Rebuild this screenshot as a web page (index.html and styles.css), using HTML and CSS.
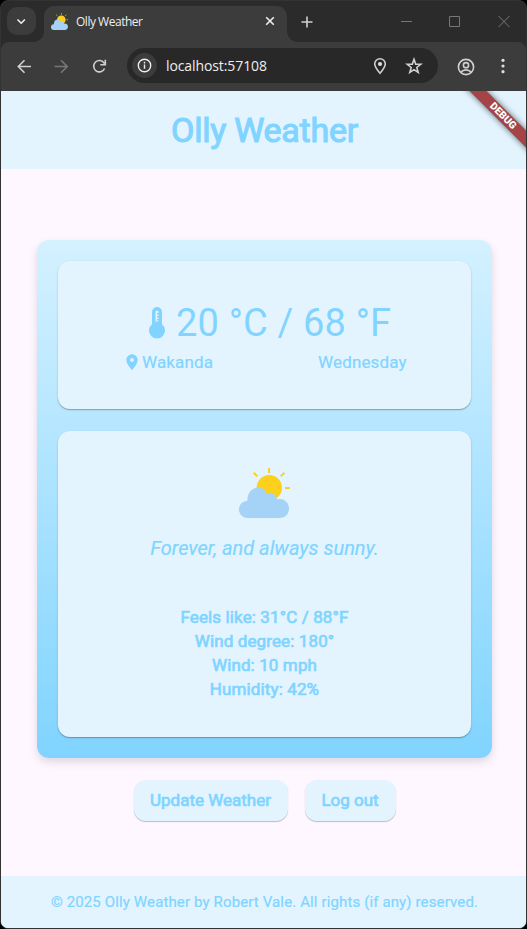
FILE: index.html
```
<!DOCTYPE html>
<html lang="en">
<head>
<meta charset="utf-8">
<title>Olly Weather</title>
<link rel="stylesheet" href="styles.css">
</head>
<body>
<svg class="defs" width="0" height="0">
  <symbol id="weather" viewBox="0 0 50 50">
    <g fill="#fdd01e"><circle cx="30.3" cy="19.8" r="12.7"/><rect x="29.1" y="0" width="2" height="5"/><rect x="46" y="19" width="5" height="2"/></g>
    <path d="M14.7 4.7l3.7 3.7M45.4 4.7l-3.7 3.7" stroke="#fdd01e" stroke-width="2"/>
    <path d="M8.5 50a8.6 8.6 0 0 1 0-17.2C7.500 19.500 23.500 14.500 27.600 25.500C32 23.500 37 26 38.300 31.500C45 29.500 50 35 50 40.500C50 46 46 50 40.500 50z" fill="#a5d3f7"/>
  </symbol>
</svg>
<div class="window">
  <div class="tabstrip">
    <div class="tab-search"><svg width="28" height="28" viewBox="0 0 28 28"><path d="M10.500 12.500l3.700 3.700 3.700-3.700" class="line white"/></svg></div>
    <div class="tab">
      <svg class="favicon" width="17" height="17"><use href="#weather"/></svg>
      <span class="tab-title">Olly Weather</span>
      <svg class="tab-close" width="10" height="10" viewBox="0 0 10 10"><path d="M1.200 1.200l7.600 7.600M8.800 1.200l-7.600 7.600" class="line white"/></svg>
    </div>
    <svg class="new-tab" width="12" height="12" viewBox="0 0 12 12"><path d="M6 .5v11M.5 6h11" class="line"/></svg>
    <svg class="controls" width="110" height="12" viewBox="0 0 110 12"><path d="M0 6.500h11M48.500 1.500h10v10h-10zM97.500 1l11 11M108.500 1l-11 11" fill="none" stroke="#777"/></svg>
  </div>
  <div class="toolbar">
    <svg class="nav" width="126" height="48" viewBox="0 0 126 48"><path d="M30 24.500H17.500M23.500 18.300l-6.200 6.200 6.200 6.200" class="line"/><path d="M53.500 24.500H66M60 18.300l6.200 6.200-6.200 6.200" class="line dim"/><path d="M103.300 21.300A5.700 5.700 0 1 0 103.600 26.500M104.300 17.800v4.900h-5" class="line"/></svg>
    <div class="omnibox">
      <svg class="info" width="25" height="25" viewBox="0 0 25 25"><circle cx="12.500" cy="12.500" r="12.500" fill="#3c3c3c"/><circle cx="12.500" cy="12.500" r="6.200" class="line white thin"/><path d="M12.500 11.500v4.300M12.500 8.800v1.600" class="line white thin"/></svg>
      <span class="url">localhost:57108</span>
      <svg class="pin" width="14" height="18" viewBox="0 0 14 18"><path d="M7 16.200C4 12.700 1.700 9.800 1.700 7a5.300 5.300 0 0 1 10.600 0c0 2.800-2.300 5.700-5.300 9.200z" class="line"/><circle cx="7" cy="7" r="2.100" fill="#dedede"/></svg>
      <svg class="star" width="18" height="18" viewBox="0 0 18 18"><path d="M9 2.300l1.700 4.800 5.100.2-4 3.200 1.400 4.900L9 12.600l-4.200 2.800 1.400-4.900-4-3.200 5.100-.2z" class="line"/></svg>
    </div>
    <svg class="profile" width="18" height="18" viewBox="0 0 18 18"><circle cx="9" cy="9" r="7.600" class="line"/><circle cx="9" cy="7.200" r="2.600" class="line"/><path d="M3.600 14.100q5.400-4.600 10.800 0" class="line"/></svg>
    <svg class="more" width="4" height="16" viewBox="0 0 4 16"><g fill="#dedede"><circle cx="2" cy="2.300" r="1.600"/><circle cx="2" cy="8" r="1.600"/><circle cx="2" cy="13.700" r="1.600"/></g></svg>
  </div>
  <div class="app">
    <header class="app-header"><h1>Olly Weather</h1><div class="debug"><span>DEBUG</span></div></header>
    <main class="main">
      <section class="forecast">
        <div class="panel current">
          <div class="temp"><svg width="16" height="33" viewBox="0 0 16 33"><path d="M3 17.200V5a5 5 0 0 1 10 0v12.200A8 8 0 1 1 3 17.200z" fill="#80d4ff"/><path d="M6.500 14.500V5a1.500 1.500 0 0 1 3 0v1H8v1.500h1.500V9H8v1.500h1.500V12H8v1.500h1.500v1z" fill="#e3f4ff"/></svg><span>20 °C / 68 °F</span></div>
          <div class="place-row">
            <div class="place"><svg width="12" height="17" viewBox="0 0 12 17"><path fill-rule="evenodd" d="M6 16.300C3 12.600.3 9.500.3 6a5.700 5.700 0 0 1 11.400 0c0 3.500-2.700 6.600-5.700 10.300zM6 4a2 2 0 1 0 0 4 2 2 0 0 0 0-4z" fill="#80d4ff"/></svg><span>Wakanda</span></div>
            <div class="day">Wednesday</div>
          </div>
        </div>
        <div class="panel details">
          <svg class="weather-icon" width="52" height="50" viewBox="0 0 52 50"><use href="#weather" width="50" height="50" class="spill"/></svg>
          <p class="summary">Forever, and always sunny.</p>
          <div class="stats"><div class="feels">Feels like: 31°C / 88°F</div><div class="degree">Wind degree: 180°</div><div class="wind">Wind: 10 mph</div><div class="humidity">Humidity: 42%</div></div>
        </div>
      </section>
      <div class="actions"><button class="update">Update Weather</button><button class="logout">Log out</button></div>
    </main>
    <footer class="app-footer">© 2025 Olly Weather by Robert Vale. All rights (if any) reserved.</footer>
  </div>
</div>
</body>
</html>
```
FILE: styles.css
```
* { box-sizing: border-box; }
body { margin: 0; background: #000; font-family: Roboto, sans-serif; }
svg { display: block; flex: none; }
.defs { position: absolute; }
symbol { overflow: visible; }
.window { width: 527px; height: 929px; border: 1px solid #333; border-radius: 8px; overflow: hidden; background: #2b2b2b; display: flex; flex-direction: column; }
.line { fill: none; stroke: #d0d0d0; stroke-width: 1.6; }
.line.white { stroke: #eee; }
.line.dim { stroke: #777; }
.line.thin { stroke-width: 1.4; }
.tabstrip { height: 41px; flex: none; display: flex; align-items: flex-start; padding-left: 6px; }
.tab-search { width: 29px; height: 28px; margin-top: 6px; border-radius: 10px; background: #3c3c3c; }
.tab { width: 243px; height: 36px; margin: 5px 0 0 8px; border-radius: 10px 10px 0 0; background: #3c3c3c; display: flex; align-items: center; padding: 0 12px 6px 7px; position: relative; }
.tab::before, .tab::after { content: ""; position: absolute; bottom: 0; width: 10px; height: 10px; }
.tab::before { left: -10px; background: radial-gradient(circle at 0 0, transparent 9.500px, #3c3c3c 10px); }
.tab::after { right: -10px; background: radial-gradient(circle at 100% 0, transparent 9.500px, #3c3c3c 10px); }
.tab-title { margin-left: 8px; color: #eee; font: 12px "Open Sans", sans-serif; letter-spacing: -.48px; white-space: nowrap; }
.tab-close { margin-left: auto; }
.new-tab { margin: 15px 0 0 14px; }
.controls { margin: 14px 0 0 88px; overflow: visible; }
.toolbar { height: 49px; flex: none; background: #3c3c3c; border-radius: 8px 8px 0 0; display: flex; align-items: flex-start; }
.omnibox { width: 311px; height: 35px; margin-top: 6px; border-radius: 18px; background: #282828; display: flex; align-items: center; padding-left: 5px; }
.url { width: 207px; margin-left: 9px; color: #eee; font: 14px "Open Sans", sans-serif; letter-spacing: -.1px; }
.star { margin-left: 18px; }
.profile { margin: 16px 0 0 19px; }
.more { margin: 16px 0 0 26px; }
.app { flex: 1; min-height: 0; display: flex; flex-direction: column; background: #fef7ff; color: #80d4ff; }
.app-header { height: 78px; flex: none; background: #e3f4ff; display: flex; justify-content: center; align-items: center; position: relative; overflow: hidden; padding-left: 2px; }
h1 { margin: 0; font-size: 34px; font-weight: 400; line-height: 40px; letter-spacing: -.25px; -webkit-text-stroke: 1.1px #80d4ff; }
.debug { position: absolute; width: 120px; height: 12px; right: -37px; top: 19px; background: #a54446; transform: rotate(45deg); box-shadow: 0 0 6px rgba(0,0,0,.6); color: #fff; text-align: center; font: 900 10.200px/12px Roboto, sans-serif; }
.main { flex: 1; display: flex; flex-direction: column; align-items: center; padding: 71px 0 0 2px; }
.forecast { width: 455px; height: 518px; flex: none; border-radius: 12px; padding: 21px; background: linear-gradient(#d4f1ff, #80d4ff); box-shadow: 0 4px 8px rgba(0,0,0,.13); display: flex; flex-direction: column; gap: 22px; }
.panel { background: #e3f4ff; border-radius: 12px; box-shadow: 0 1px 1px rgba(0,0,0,.25), 0 1px 3px rgba(0,0,0,.09); }
.current { height: 148px; padding-top: 38px; }
.temp { display: flex; align-items: center; gap: 11px; margin-left: 91px; height: 48px; font-size: 38px; letter-spacing: .18px; white-space: nowrap; }
.place-row { display: flex; align-items: center; margin-left: 68px; height: 30px; font-size: 17px; letter-spacing: .15px; -webkit-text-stroke: .2px #80d4ff; }
.place { display: flex; align-items: center; gap: 4px; width: 192px; }
.details { height: 306px; display: flex; flex-direction: column; align-items: center; padding-top: 37px; }
.weather-icon { margin-left: 1px; }
.spill { overflow: visible; }
.summary { margin: 17px 0 0; font-size: 20px; font-style: italic; line-height: 26px; white-space: nowrap; -webkit-text-stroke: .2px #80d4ff; }
.stats { margin-top: 44px; font-size: 17px; line-height: 24px; letter-spacing: .12px; text-align: center; -webkit-text-stroke: .7px #80d4ff; }
.actions { display: flex; gap: 17px; margin-top: 22px; }
button { height: 41px; border: 0; border-radius: 12px; padding: 0 0 2px; background: #e3f4ff; box-shadow: 0 1px 1px rgba(0,0,0,.25); font: 17px Roboto, sans-serif; color: #80d4ff; -webkit-text-stroke: .7px #80d4ff; }
.update { width: 154px; }
.logout { width: 91px; }
.app-footer { height: 52px; flex: none; background: #e3f4ff; padding-left: 2px; text-align: center; font-size: 15px; line-height: 52px; letter-spacing: .13px; white-space: nowrap; -webkit-text-stroke: .2px #80d4ff; }
```
